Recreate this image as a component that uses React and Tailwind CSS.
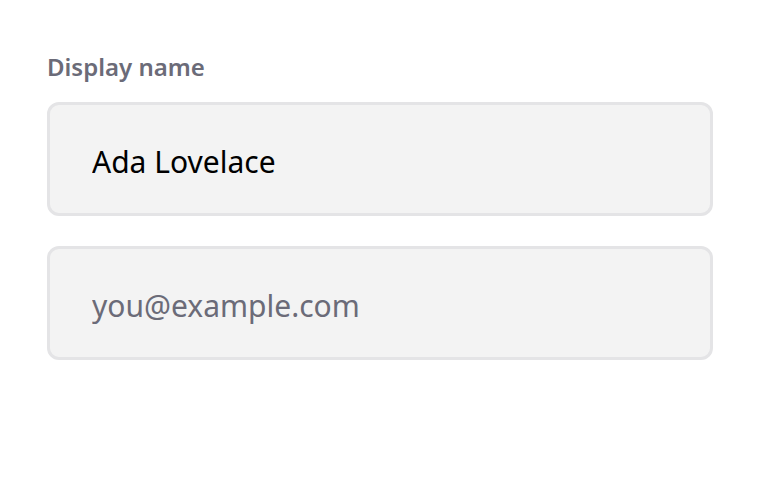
export default function App() {
  return (
    <div
      className="min-h-[500px] bg-white px-[47px] pt-[51px]"
      style={{ fontFamily: '"Noto Sans", "Open Sans", sans-serif' }}
    >
      <label className="mb-[19px] block text-[24px] font-semibold leading-[32px] text-[#6b6b78]">
        Display name
      </label>
      <div className="flex flex-col gap-[30px]">
        <input
          defaultValue="Ada Lovelace"
          className="h-[114px] w-[666px] rounded-[12px] border-[3px] border-[#e4e4e6] bg-[#f3f3f3] px-[42px] pt-[4px] text-[30px] text-black outline-none"
        />
        <input
          placeholder="you@example.com"
          className="h-[114px] w-[666px] rounded-[12px] border-[3px] border-[#e4e4e6] bg-[#f3f3f3] px-[42px] pt-[4px] text-[30px] text-black outline-none placeholder:text-[#6b6b78]"
        />
      </div>
    </div>
  );
}
